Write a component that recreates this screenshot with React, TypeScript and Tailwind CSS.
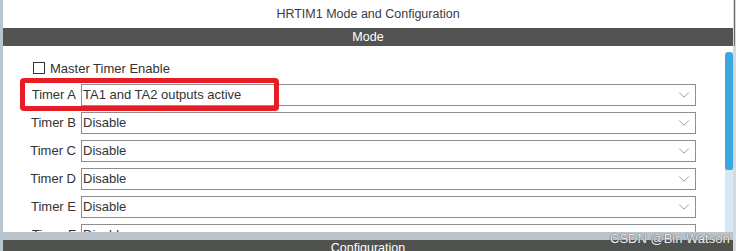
import { ChevronDown } from "lucide-react";

const timers = [
  { name: "Timer A", value: "TA1 and TA2 outputs active" },
  { name: "Timer B", value: "Disable" },
  { name: "Timer C", value: "Disable" },
  { name: "Timer D", value: "Disable" },
  { name: "Timer E", value: "Disable" },
  { name: "Timer F", value: "Disable" },
];

const App = () => {
  return (
    <div
      className="relative flex w-[736px] h-[251px] overflow-hidden bg-white text-[#333] text-[13px]"
      style={{ fontFamily: '"Liberation Sans", Arial, sans-serif' }}
    >
      {/* left frame edge */}
      <div className="w-[3px] shrink-0 bg-[#b9c5cc]" />

      <div className="flex flex-col flex-1 min-w-0">
        {/* window title */}
        <div className="h-[28px] shrink-0 flex items-center justify-center text-[12.5px] text-[#3c3c3c]">
          HRTIM1 Mode and Configuration
        </div>

        {/* Mode header */}
        <div className="h-[18px] shrink-0 flex items-center justify-center bg-[#525452] text-white text-[12.5px]">
          Mode
        </div>

        {/* scrolling content */}
        <div className="h-[186px] shrink-0 flex">
          <div className="flex-1 overflow-hidden">
            <div className="flex items-center h-[12px] mt-[16px] ml-[30px] gap-[5px]">
              <span className="w-[12px] h-[12px] border border-[#333] bg-white" />
              <span className="leading-none">Master Timer Enable</span>
            </div>
            <div className="flex flex-col gap-[6px] mt-[10px]">
              {timers.map((t) => (
                <div key={t.name} className="flex items-center h-[22px] shrink-0">
                  <div className="w-[74px] pr-[1px] text-right shrink-0">{t.name}</div>
                  <div className="ml-[4px] w-[615px] h-[22px] flex items-center justify-between border border-[#8e8e8e] pl-[1px] pr-[2px]">
                    <span>{t.value}</span>
                    <ChevronDown className="w-[18px] h-[18px] text-[#7a7a7a]" strokeWidth={1} />
                  </div>
                </div>
              ))}
            </div>
          </div>

          {/* scrollbar */}
          <div className="w-[8px] flex flex-col pt-[6px] bg-white">
            <div className="flex-1 flex flex-col bg-[#d6e7f5]">
              <div className="h-[118px] bg-[#3aa8de] rounded-t-[4px] rounded-b-[2px]" />
            </div>
          </div>
        </div>

        {/* splitter */}
        <div className="h-[8px] shrink-0 bg-[#b9c3c9]" />

        {/* Configuration header */}
        <div className="h-[11px] shrink-0 flex justify-center bg-[#505250] text-white text-[12.5px] leading-[17px] overflow-hidden">
          Configuration
        </div>
      </div>

      {/* right frame edge */}
      <div className="w-[3px] shrink-0 flex flex-col bg-[#d9d9d9]">
        <div className="h-[46px] ml-[1px] w-[1px] bg-[#6b6b6b]" />
      </div>

      {/* red highlight */}
      <div className="absolute left-[20px] top-[78px] w-[259px] h-[33px] border-[5px] border-[#e81c24] rounded-[4px]" />

      {/* watermark */}
      <div
        className="absolute left-[610px] top-[229px] whitespace-nowrap text-[13px] text-[#e9eef0]"
        style={{ textShadow: "0 0 1px #555, 0 0 1px #555" }}
      >
        CSDN @Bin Watson
      </div>
    </div>
  );
};

export default App;
